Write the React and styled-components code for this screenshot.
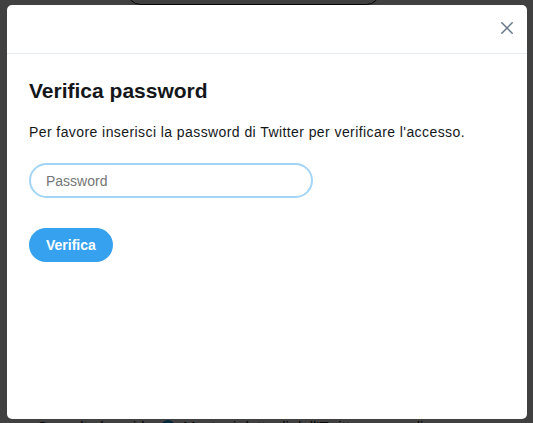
import React from "react";
import styled, { createGlobalStyle } from "styled-components";

const GlobalStyle = createGlobalStyle`
  html, body {
    margin: 0;
    padding: 0;
    background: #ffffff;
    overflow: hidden;
  }
  * {
    box-sizing: border-box;
  }
`;

function CloseIcon() {
  return (
    <svg width="12" height="12" viewBox="0 0 12 12" fill="none">
      <path
        d="M0.8 0.8 L11.2 11.2 M11.2 0.8 L0.8 11.2"
        stroke="#657786"
        strokeWidth="1.5"
        strokeLinecap="round"
      />
    </svg>
  );
}

function App() {
  return (
    <Page>
      <GlobalStyle />
      {/* page behind the dialog */}
      <Backdrop>
        <GhostButton>Configura la verifica dell'accesso</GhostButton>
        <GhostFooter>
          Consulta la guida
          <GhostDot />
          Mostra i dettagli dell'Twitter e accedi
        </GhostFooter>
      </Backdrop>

      {/* dialog */}
      <Overlay>
        <Modal>
          <ModalHeader>
            <CloseButton aria-label="Chiudi">
              <CloseIcon />
            </CloseButton>
          </ModalHeader>
          <ModalBody>
            <Title>Verifica password</Title>
            <Text>
              Per favore inserisci la password di Twitter per verificare
              l'accesso.
            </Text>
            <PasswordInput type="password" placeholder="Password" />
            <VerifyButton>Verifica</VerifyButton>
          </ModalBody>
        </Modal>
      </Overlay>
    </Page>
  );
}

export default App;

const Page = styled.div`
  position: relative;
  width: 533px;
  height: 423px;
  overflow: hidden;
  font-family: "Liberation Sans", Arial, "Helvetica Neue", sans-serif;
  color: #14171a;
`;

const Backdrop = styled.div`
  display: flex;
  flex-direction: column;
  justify-content: space-between;
  height: 100%;
`;

const GhostButton = styled.div`
  margin: -22px 0 0 127px;
  width: 253px;
  height: 27px;
  border: 1px solid #14171a;
  border-radius: 100px;
  color: #17bf63;
  font-size: 15px;
  font-weight: bold;
  display: flex;
  align-items: center;
  justify-content: center;
`;

const GhostFooter = styled.div`
  display: flex;
  align-items: center;
  gap: 8px;
  margin: 0 0 -14px 37px;
  font-size: 15px;
  line-height: 20px;
  white-space: nowrap;
`;

const GhostDot = styled.span`
  width: 14px;
  height: 14px;
  border-radius: 50%;
  background: #1da1f2;
`;

const Overlay = styled.div`
  position: absolute;
  inset: 0;
  display: flex;
  padding: 5px 6px 4px 7px;
  background: rgba(0, 0, 0, 0.75);
`;

const Modal = styled.div`
  flex: 1;
  display: flex;
  flex-direction: column;
  background: #ffffff;
  border-radius: 5px;
  overflow: hidden;
`;

const ModalHeader = styled.div`
  display: flex;
  align-items: center;
  justify-content: flex-end;
  height: 49px;
  padding: 0 14px 2px 0;
  border-bottom: 1px solid #e6ecf0;
`;

const CloseButton = styled.button`
  display: flex;
  padding: 0;
  border: none;
  background: transparent;
  cursor: pointer;
`;

const ModalBody = styled.div`
  display: flex;
  flex-direction: column;
  align-items: flex-start;
  padding: 24px 22px 0;
`;

const Title = styled.h2`
  margin: 0;
  font-size: 21px;
  line-height: 25px;
  font-weight: bold;
  color: #14171a;
`;

const Text = styled.p`
  margin: 20px 0 0;
  font-size: 14px;
  line-height: 18px;
  letter-spacing: 0.42px;
  color: #14171a;
`;

const PasswordInput = styled.input`
  margin-top: 22px;
  width: 284px;
  height: 35px;
  padding: 0 15px;
  border: 2px solid #a4d4f6;
  border-radius: 100px;
  font-family: inherit;
  font-size: 14px;
  color: #14171a;
  outline: none;

  ::placeholder {
    color: #a3adb8;
  }
`;

const VerifyButton = styled.button`
  margin-top: 30px;
  height: 34px;
  padding: 0 17px;
  border: none;
  border-radius: 100px;
  background: #35a1ef;
  color: #ffffff;
  font-family: inherit;
  font-size: 14px;
  font-weight: bold;
  cursor: pointer;
`;
